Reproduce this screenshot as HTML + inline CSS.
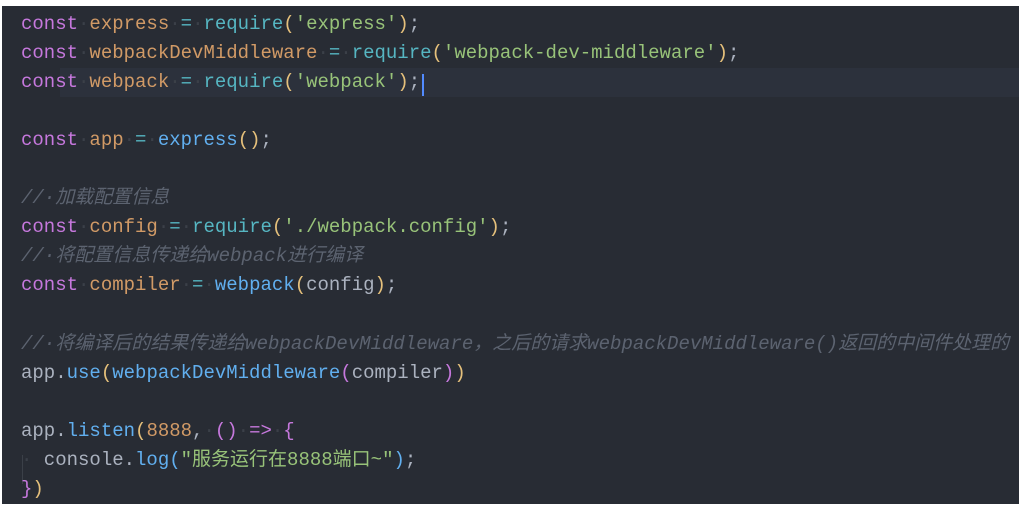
<!DOCTYPE html>
<html><head><meta charset="utf-8"><style>
html,body{margin:0;padding:0;background:#fff;width:1024px;height:508px;overflow:hidden}
#ed{position:absolute;left:2px;top:6px;width:1017px;height:498px;background:#282c34}
.l{position:absolute;left:19px;height:29px;line-height:29px;margin-top:3px;font-family:"Liberation Mono","Noto Sans CJK SC",monospace;font-size:19px;white-space:pre;color:#abb2bf}
.hl{position:absolute;left:58px;width:959px;top:62px;height:29px;background:#2c313c}
.k{color:#c678dd}.v{color:#d19a66}.f{color:#56b6c2}.y{color:#e5c07b}.s{color:#98c379}.b{color:#61afef}.c{color:#5c6370;font-style:italic}.d{color:#3b4048}.p{color:#c678dd}.n{color:#d19a66}
.cur{position:absolute;left:420px;top:68px;width:2px;height:22px;background:#528bff}
.guide{position:absolute;left:20px;top:449px;width:1px;height:29px;background:#3b4048}
</style></head><body><div id="ed">
<div class="hl"></div>
<div class="l" style="top:1px"><span class="k">const</span><span class="d">·</span><span class="v">express</span><span class="d">·</span><span class="f">=</span><span class="d">·</span><span class="f">require</span><span class="y">(</span><span class="s">'express'</span><span class="y">)</span>;</div>
<div class="l" style="top:30px"><span class="k">const</span><span class="d">·</span><span class="v">webpackDevMiddleware</span><span class="d">·</span><span class="f">=</span><span class="d">·</span><span class="f">require</span><span class="y">(</span><span class="s">'webpack-dev-middleware'</span><span class="y">)</span>;</div>
<div class="l" style="top:59px"><span class="k">const</span><span class="d">·</span><span class="v">webpack</span><span class="d">·</span><span class="f">=</span><span class="d">·</span><span class="f">require</span><span class="y">(</span><span class="s">'webpack'</span><span class="y">)</span>;</div>
<div class="cur"></div>
<div class="l" style="top:117px"><span class="k">const</span><span class="d">·</span><span class="v">app</span><span class="d">·</span><span class="f">=</span><span class="d">·</span><span class="b">express</span><span class="y">()</span>;</div>
<div class="l" style="top:175px"><span class="c">//·加载配置信息</span></div>
<div class="l" style="top:204px"><span class="k">const</span><span class="d">·</span><span class="v">config</span><span class="d">·</span><span class="f">=</span><span class="d">·</span><span class="f">require</span><span class="y">(</span><span class="s">'./webpack.config'</span><span class="y">)</span>;</div>
<div class="l" style="top:233px"><span class="c">//·将配置信息传递给webpack进行编译</span></div>
<div class="l" style="top:262px"><span class="k">const</span><span class="d">·</span><span class="v">compiler</span><span class="d">·</span><span class="f">=</span><span class="d">·</span><span class="b">webpack</span><span class="y">(</span>config<span class="y">)</span>;</div>
<div class="l" style="top:321px"><span class="c">//·将编译后的结果传递给webpackDevMiddleware，之后的请求webpackDevMiddleware()返回的中间件处理的</span></div>
<div class="l" style="top:350px">app.<span class="b">use</span><span class="y">(</span><span class="b">webpackDevMiddleware</span><span class="p">(</span>compiler<span class="p">)</span><span class="y">)</span></div>
<div class="l" style="top:408px">app.<span class="b">listen</span><span class="y">(</span><span class="n">8888</span>,<span class="d">·</span><span class="p">()</span><span class="d">·</span><span class="k">=&gt;</span><span class="d">·</span><span class="p">{</span></div>
<div class="guide"></div>
<div class="l" style="top:437px"><span class="d">·</span> console.<span class="b">log</span><span class="b">(</span><span class="s">"服务运行在8888端口~"</span><span class="b">)</span>;</div>
<div class="l" style="top:466px"><span class="p">}</span><span class="y">)</span></div>
</div></body></html>
